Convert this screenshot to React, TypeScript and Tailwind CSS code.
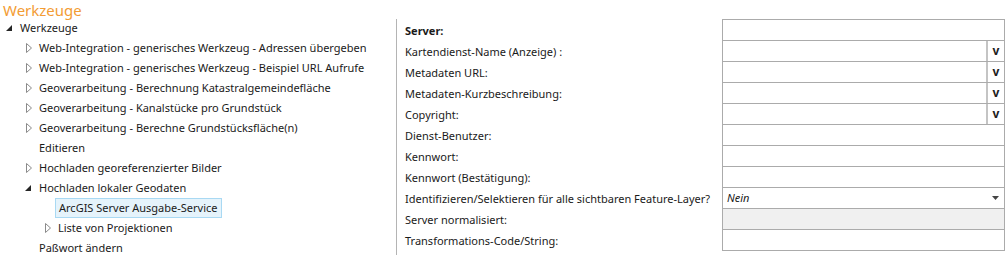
import React from 'react';

type Node = { label: string; level: number; state: 'open' | 'closed' | 'leaf'; selected?: boolean };

const TREE: Node[] = [
  { label: 'Werkzeuge', level: 0, state: 'open' },
  { label: 'Web-Integration - generisches Werkzeug - Adressen übergeben', level: 1, state: 'closed' },
  { label: 'Web-Integration - generisches Werkzeug - Beispiel URL Aufrufe', level: 1, state: 'closed' },
  { label: 'Geoverarbeitung - Berechnung Katastralgemeindefläche', level: 1, state: 'closed' },
  { label: 'Geoverarbeitung - Kanalstücke pro Grundstück', level: 1, state: 'closed' },
  { label: 'Geoverarbeitung - Berechne Grundstücksfläche(n)', level: 1, state: 'closed' },
  { label: 'Editieren', level: 1, state: 'leaf' },
  { label: 'Hochladen georeferenzierter Bilder', level: 1, state: 'closed' },
  { label: 'Hochladen lokaler Geodaten', level: 1, state: 'open' },
  { label: 'ArcGIS Server Ausgabe-Service', level: 2, state: 'leaf', selected: true },
  { label: 'Liste von Projektionen', level: 2, state: 'closed' },
  { label: 'Paßwort ändern', level: 1, state: 'leaf' },
];

type Field = { label: string; kind: 'text' | 'v' | 'select' | 'disabled'; bold?: boolean };

const FIELDS: Field[] = [
  { label: 'Server:', kind: 'text', bold: true },
  { label: 'Kartendienst-Name (Anzeige) :', kind: 'v' },
  { label: 'Metadaten URL:', kind: 'v' },
  { label: 'Metadaten-Kurzbeschreibung:', kind: 'v' },
  { label: 'Copyright:', kind: 'v' },
  { label: 'Dienst-Benutzer:', kind: 'text' },
  { label: 'Kennwort:', kind: 'text' },
  { label: 'Kennwort (Bestätigung):', kind: 'text' },
  { label: 'Identifizieren/Selektieren für alle sichtbaren Feature-Layer?', kind: 'select' },
  { label: 'Server normalisiert:', kind: 'disabled' },
  { label: 'Transformations-Code/String:', kind: 'text' },
];

const Arrow = ({ state }: { state: Node['state'] }) => {
  if (state === 'leaf') return <span className="w-[12px] shrink-0" />;
  if (state === 'open')
    return (
      <svg width="12" height="12" viewBox="0 0 12 12" className="shrink-0">
        <polygon points="8,3 8,9 2,9" fill="#262626" />
      </svg>
    );
  return (
    <svg width="12" height="12" viewBox="0 0 12 12" className="shrink-0">
      <polygon points="3.5,1.5 3.5,10.5 8.5,6" fill="none" stroke="#8a8a8a" strokeWidth="1" />
    </svg>
  );
};

const TreeRow = ({ node }: { node: Node }) => {
  const indent = ['pl-[4px]', 'pl-[23px]', 'pl-[42px]'][node.level];
  return (
    <div className={`flex items-center h-[20px] ${indent}`}>
      <Arrow state={node.state} />
      <span
        className={
          node.selected
            ? 'ml-[1px] px-[3px] h-[20px] leading-[18px] bg-[#e5f3fb] border border-[#a9d9f3] text-[#1a1a1a] whitespace-nowrap'
            : 'ml-[4px] text-[#1a1a1a] whitespace-nowrap'
        }
      >
        {node.label}
      </span>
    </div>
  );
};

const FieldInput = ({ field, last }: { field: Field; last: boolean }) => {
  const base = `border-l border-r border-t border-[#ababab] flex ${last ? 'border-b h-[22px]' : 'h-[21px]'}`;
  if (field.kind === 'v')
    return (
      <div className={base}>
        <div className="flex-1 bg-white" />
        <div className="w-[18px] border-l-2 border-[#c4c4c4] flex items-center justify-center font-bold text-[12px] leading-none text-[#202020]">
          v
        </div>
      </div>
    );
  if (field.kind === 'select')
    return (
      <div className={`${base} items-center pl-[4px] pr-[5px]`}>
        <span className="flex-1 italic text-[11px] text-[#1a1a1a]">Nein</span>
        <svg width="7" height="4" viewBox="0 0 7 4">
          <polygon points="0,0 7,0 3.5,4" fill="#444" />
        </svg>
      </div>
    );
  if (field.kind === 'disabled') return <div className={`${base} bg-[#f0f0f0]`} />;
  return <div className={base} />;
};

export default function App() {
  return (
    <div className="w-[1007px] h-[255px] overflow-hidden bg-white text-[11px] font-['Segoe_UI','Noto_Sans',sans-serif]">
      <div className="h-[18px] pl-[3px] text-[15px] leading-[20px] text-[#f39c34]">Werkzeuge</div>
      <div className="flex">
        <div className="w-[396px] shrink-0">
          {TREE.map((n, i) => (
            <TreeRow key={i} node={n} />
          ))}
        </div>
        <div className="w-[611px] shrink-0 mt-[1px] border-l border-[#b4b4b4] flex pl-[8px]">
          <div className="w-[317px] shrink-0">
            {FIELDS.map((f, i) => (
              <div
                key={i}
                className={`h-[21px] flex items-center pt-[4px] text-[#1a1a1a] whitespace-nowrap ${f.bold ? 'font-bold' : ''}`}
              >
                {f.label}
              </div>
            ))}
          </div>
          <div className="w-[283px] shrink-0">
            {FIELDS.map((f, i) => (
              <FieldInput key={i} field={f} last={i === FIELDS.length - 1} />
            ))}
          </div>
        </div>
      </div>
    </div>
  );
}
